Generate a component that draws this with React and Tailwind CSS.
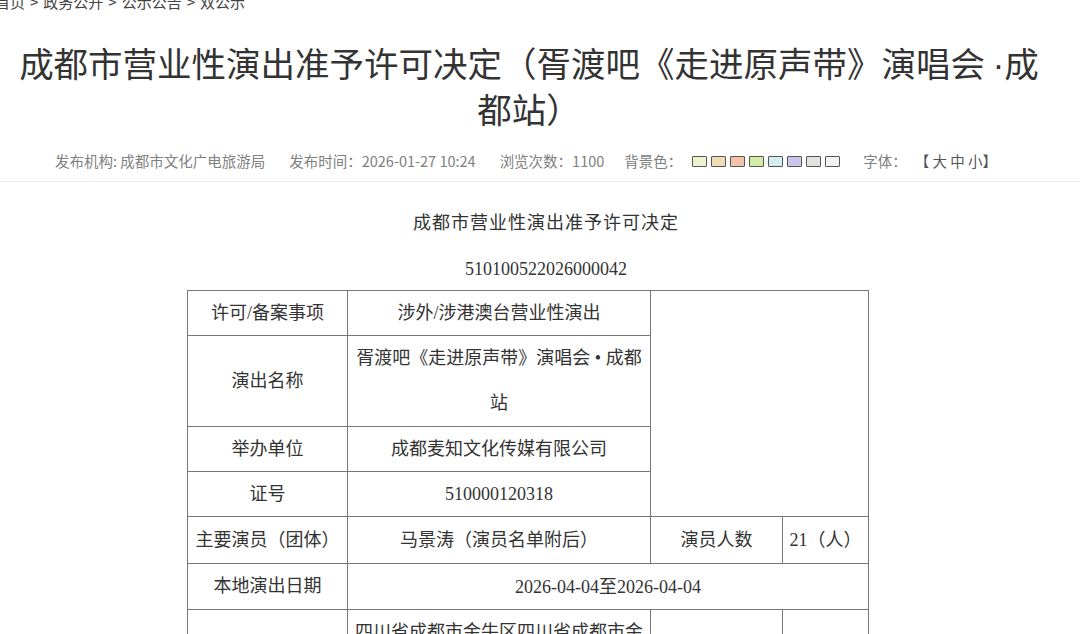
import React from 'react';

const swatches = ['#eef2cc', '#eedcb6', '#f4c2aa', '#d2eca4', '#d2eef0', '#cac6ec', '#e2e2e2', '#f3f3f3'];

function Cell({ children, className = '', ...rest }) {
  return (
    <td className={`border border-[#777] text-center align-middle px-[6px] ${className || 'leading-[44px]'}`} {...rest}>
      {children}
    </td>
  );
}

export default function App() {
  return (
    <div className="min-h-screen bg-white font-['Noto_Sans_CJK_SC',sans-serif] text-[#333] overflow-hidden">
      {/* breadcrumb, scrolled mostly out of view */}
      <div className="-mt-[8px] h-[20px] leading-[20px] text-[15px] text-[#444] -ml-[5px] flex whitespace-nowrap">
        <span>首页</span>
        <span className="mx-[5px]">&gt;</span>
        <span>政务公开</span>
        <span className="mx-[5px]">&gt;</span>
        <span>公示公告</span>
        <span className="mx-[5px]">&gt;</span>
        <span>双公示</span>
      </div>

      <h1 className="mt-[29px] pl-[12px] pr-[34px] text-center text-[34.5px] leading-[43px] font-normal text-[#333]">
        成都市营业性演出准予许可决定（胥渡吧《走进原声带》演唱会 <span className="font-['Liberation_Sans']">·</span>成都站）
      </h1>

      <div className="mt-[21px] flex items-center justify-center pr-[28px] text-[14.5px] leading-[20px] text-[#808080] whitespace-nowrap">
        <span>发布机构: 成都市文化广电旅游局</span>
        <span className="ml-[24px]">发布时间：2026-01-27 10:24</span>
        <span className="ml-[24px]">浏览次数：1100</span>
        <span className="ml-[20px]">背景色：</span>
        <span className="ml-[10px] flex gap-[4px]">
          {swatches.map((c) => (
            <span key={c} className="block w-[15px] h-[11px] border-[1.5px] border-[#555] rounded-[1px]" style={{ backgroundColor: c }} />
          ))}
        </span>
        <span className="ml-[23px]">字体：</span>
        <span className="ml-[8px] text-[#555]">【 大 中 小】</span>
      </div>

      <div className="mt-[10px] border-t border-[#eaeaea]" />

      <div className="font-['Liberation_Serif','Noto_Sans_CJK_SC',serif] text-[18px] text-[#333]">
        <p className="mt-[27px] text-center pl-[12px] leading-[28px] tracking-[1px]">成都市营业性演出准予许可决定</p>
        <p className="mt-[18px] text-center pl-[12px] leading-[28px]">510100522026000042</p>

        <table className="mt-[7px] ml-[187px] w-[681px] border-collapse table-fixed">
          <colgroup>
            <col className="w-[160px]" />
            <col className="w-[303px]" />
            <col className="w-[132px]" />
            <col className="w-[86px]" />
          </colgroup>
          <tbody>
            <tr>
              <Cell>许可/备案事项</Cell>
              <Cell>涉外/涉港澳台营业性演出</Cell>
              <Cell colSpan={2} rowSpan={4} />
            </tr>
            <tr>
              <Cell>演出名称</Cell>
              <Cell className="leading-[45px]">胥渡吧《走进原声带》演唱会 • 成都站</Cell>
            </tr>
            <tr>
              <Cell>举办单位</Cell>
              <Cell>成都麦知文化传媒有限公司</Cell>
            </tr>
            <tr>
              <Cell>证号</Cell>
              <Cell>510000120318</Cell>
            </tr>
            <tr>
              <Cell className="px-[4px] leading-[46px]">主要演员（团体）</Cell>
              <Cell>马景涛（演员名单附后）</Cell>
              <Cell>演员人数</Cell>
              <Cell className="px-[4px] leading-[44px]">21（人）</Cell>
            </tr>
            <tr>
              <Cell className="leading-[45px]">本地演出日期</Cell>
              <Cell colSpan={3}>2026-04-04至2026-04-04</Cell>
            </tr>
            <tr>
              <Cell>演出场所</Cell>
              <Cell className="leading-[45px]">四川省成都市金牛区四川省成都市金牛区一品天下大街</Cell>
              <Cell>演出场次</Cell>
              <Cell>1</Cell>
            </tr>
          </tbody>
        </table>
      </div>
    </div>
  );
}
